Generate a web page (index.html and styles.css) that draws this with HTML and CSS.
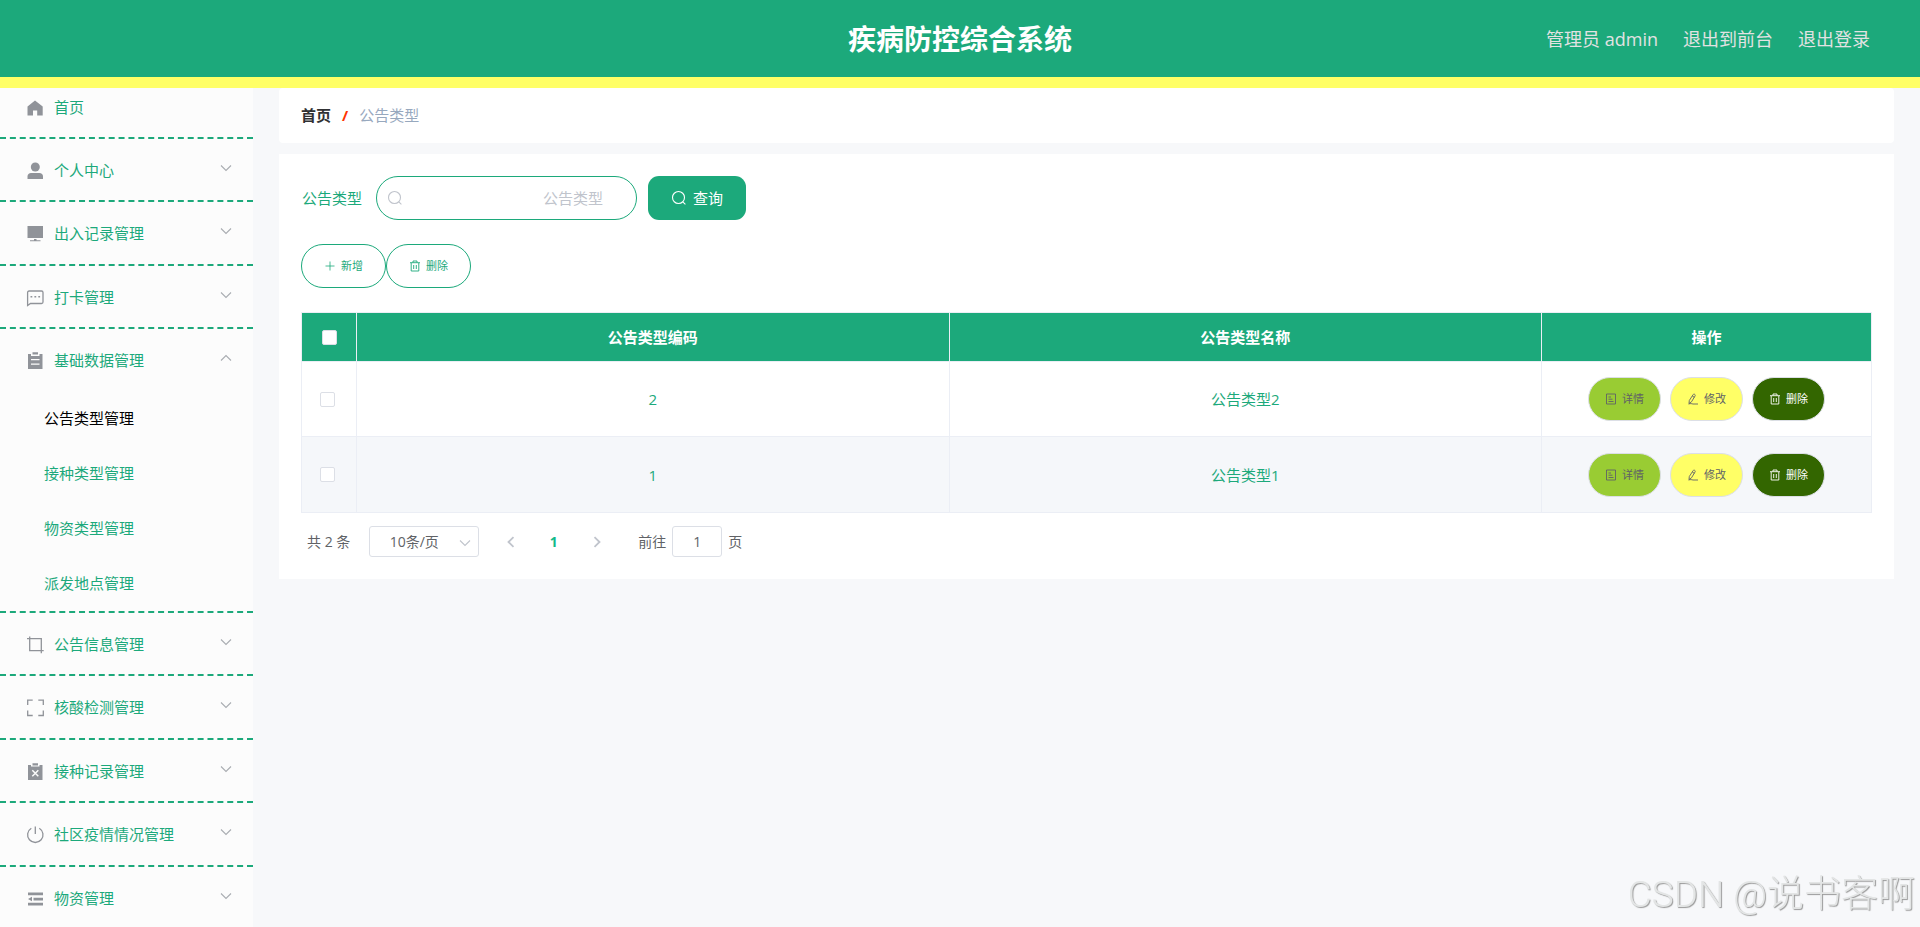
FILE: index.html
```html
<!DOCTYPE html>
<html lang="zh-CN">
<head>
<meta charset="utf-8">
<title>疾病防控综合系统</title>
<link rel="stylesheet" href="styles.css">
</head>
<body>
<svg class="sprite" aria-hidden="true">
  <symbol id="i-down" viewBox="0 0 12 12"><path d="M1 3.5l5 5 5-5" fill="none" stroke="currentColor" stroke-width="1.1"/></symbol>
  <symbol id="i-up" viewBox="0 0 12 12"><path d="M1 8.5l5-5 5 5" fill="none" stroke="currentColor" stroke-width="1.1"/></symbol>
  <symbol id="i-left" viewBox="0 0 12 12"><path d="M8.5 1.2L3.5 6l5 4.8" fill="none" stroke="currentColor" stroke-width="1.8"/></symbol>
  <symbol id="i-right" viewBox="0 0 12 12"><path d="M3.5 1.2l5 4.8-5 4.8" fill="none" stroke="currentColor" stroke-width="1.8"/></symbol>
  <symbol id="i-search" viewBox="0 0 16 16"><g fill="none" stroke="currentColor" stroke-width="1.1"><circle cx="7.5" cy="7.5" r="6"/><path d="M11.8 11.8l2.6 2.6"/></g></symbol>
  <symbol id="i-plus" viewBox="0 0 12 12"><path d="M6 1.500v9M1.500 6h9" fill="none" stroke="currentColor" stroke-width=".8"/></symbol>
  <symbol id="i-trash" viewBox="0 0 12 12"><path d="M1 2.7h10M4 2.5V1h4v1.5M2.2 3v8h7.6V3M4.7 5v4M7.3 5v4" fill="none" stroke="currentColor" stroke-width=".9"/></symbol>
  <symbol id="i-doc" viewBox="0 0 12 12"><path d="M1.5 1h9v10h-9zM3.5 4h2.5M3.5 6.2h4M3.5 8.5h5" fill="none" stroke="currentColor" stroke-width=".9"/></symbol>
  <symbol id="i-edit" viewBox="0 0 12 12"><path d="M6 1.8c.4-.7 1-.8 1.600-.5.7.4.8 1 .5 1.600L4.500 8.800 2 10.500l.3-3zM5.300 3.100l2.100 1.200M1.500 11c2.500-.8 3-.2 4.500 0h5" fill="none" stroke="currentColor" stroke-width=".9"/></symbol>
</svg>

<header class="topbar">
  <h1 class="topbar-title">疾病防控综合系统</h1>
  <nav class="topbar-nav">
    <span>管理员 admin</span>
    <a href="#">退出到前台</a>
    <a href="#">退出登录</a>
  </nav>
</header>

<div class="layout">
  <aside class="sidebar">
    <ul class="menu">
      <li class="menu-item menu-home">
        <a class="menu-title" href="#"><svg class="menu-icon" viewBox="0 0 20 20"><path d="M10 3.500L2.500 9.500V18.500H8v-5h4.200v5h5.500V9.500z"/></svg><span>首页</span></a>
      </li>
      <li class="menu-item">
        <button class="menu-title" type="button"><svg class="menu-icon" viewBox="0 0 20 20"><circle cx="10.300" cy="7" r="4.500"/><path d="M2.500 19v-2.500c0-2 1.500-3.500 3.500-3.500h8.500c2 0 3.500 1.500 3.500 3.500V19z"/></svg><span>个人中心</span><svg class="menu-arrow"><use href="#i-down"/></svg></button>
      </li>
      <li class="menu-item">
        <button class="menu-title" type="button"><svg class="menu-icon" viewBox="0 0 20 20"><path d="M2.500 3H18v12H2.500zM9 16h2.500v1.200h4V18.300H5v-1.100h4z"/></svg><span>出入记录管理</span><svg class="menu-arrow"><use href="#i-down"/></svg></button>
      </li>
      <li class="menu-item">
        <button class="menu-title" type="button"><svg class="menu-icon" viewBox="0 0 20 20"><path class="line" d="M2.600 18.500V5.500q0-1.500 1.500-1.500h12.400q1.500 0 1.500 1.500v9.500q0 1.500-1.500 1.500H5.500z"/><path d="M5.500 9h1.800v1.600H5.500zM9.400 9h1.800v1.600H9.400zM13.300 9h1.800v1.600h-1.800z"/></svg><span>打卡管理</span><svg class="menu-arrow"><use href="#i-down"/></svg></button>
      </li>
      <li class="menu-item">
        <button class="menu-title" type="button" aria-expanded="true"><svg class="menu-icon" viewBox="0 0 20 20"><path fill-rule="evenodd" d="M3 4h3v2h8.500V4h3v15H3zM6 9v1.200h8.500V9zM6 13.500v1.200h8.500v-1.200zM7.500 2.300h5.500V4.500H7.500z"/></svg><span>基础数据管理</span><svg class="menu-arrow"><use href="#i-up"/></svg></button>
        <ul class="submenu">
          <li><a class="is-active" href="#">公告类型管理</a></li>
          <li><a href="#">接种类型管理</a></li>
          <li><a href="#">物资类型管理</a></li>
          <li><a href="#">派发地点管理</a></li>
        </ul>
      </li>
      <li class="menu-item">
        <button class="menu-title" type="button"><svg class="menu-icon" viewBox="0 0 20 20"><path class="line" d="M2 4.700h14.300v14.500M4.700 2.500v14.200h14"/></svg><span>公告信息管理</span><svg class="menu-arrow"><use href="#i-down"/></svg></button>
      </li>
      <li class="menu-item">
        <button class="menu-title" type="button"><svg class="menu-icon" viewBox="0 0 20 20"><path class="line" d="M2.700 8V3.200h5M13.300 3.200h5V8M18.300 13.500v5h-5M7.700 18.500h-5v-5"/></svg><span>核酸检测管理</span><svg class="menu-arrow"><use href="#i-down"/></svg></button>
      </li>
      <li class="menu-item">
        <button class="menu-title" type="button"><svg class="menu-icon" viewBox="0 0 20 20"><path d="M3 4h3v1.500h8.500V4h3v15H3zM7.500 2.300h5.500V4.500H7.500z"/><path class="cut" d="M7.300 9.300l6 6M13.300 9.300l-6 6"/></svg><span>接种记录管理</span><svg class="menu-arrow"><use href="#i-down"/></svg></button>
      </li>
      <li class="menu-item">
        <button class="menu-title" type="button"><svg class="menu-icon" viewBox="0 0 20 20"><path class="line" d="M10.300 2.500V10M6.300 4.200a7.700 7.700 0 1 0 8 0"/></svg><span>社区疫情情况管理</span><svg class="menu-arrow"><use href="#i-down"/></svg></button>
      </li>
      <li class="menu-item">
        <button class="menu-title" type="button"><svg class="menu-icon" viewBox="0 0 20 20"><path d="M3 4.500h15v2.800H3zM8.500 9.700H18v2.800H8.500zM3 14.700h15v2.800H3zM3 11l4-2.300v4.600z"/></svg><span>物资管理</span><svg class="menu-arrow"><use href="#i-down"/></svg></button>
      </li>
    </ul>
  </aside>

  <main class="content">
    <nav class="breadcrumb" aria-label="面包屑">
      <a href="#">首页</a><span class="breadcrumb-sep">/</span><span>公告类型</span>
    </nav>

    <section class="panel">
      <form class="search">
        <label for="type-name">公告类型</label>
        <div class="search-field">
          <svg class="search-icon"><use href="#i-search"/></svg>
          <input id="type-name" type="text" placeholder="公告类型">
        </div>
        <button class="btn-search" type="button"><svg class="search-glyph"><use href="#i-search"/></svg>查询</button>
      </form>

      <div class="toolbar">
        <button class="btn btn-outline" type="button"><svg><use href="#i-plus"/></svg>新增</button>
        <button class="btn btn-outline" type="button"><svg><use href="#i-trash"/></svg>删除</button>
      </div>

      <table class="table">
        <colgroup><col class="col-check"><col><col><col class="col-actions"></colgroup>
        <thead>
          <tr><th><input type="checkbox" aria-label="全选"></th><th>公告类型编码</th><th>公告类型名称</th><th>操作</th></tr>
        </thead>
        <tbody>
          <tr>
            <td class="cell-check"><input type="checkbox" aria-label="选择 2"></td><td>2</td><td>公告类型2</td>
            <td><div class="actions">
              <button class="btn btn-detail" type="button"><svg><use href="#i-doc"/></svg>详情</button>
              <button class="btn btn-edit" type="button"><svg><use href="#i-edit"/></svg>修改</button>
              <button class="btn btn-delete" type="button"><svg><use href="#i-trash"/></svg>删除</button>
            </div></td>
          </tr>
          <tr>
            <td class="cell-check"><input type="checkbox" aria-label="选择 1"></td><td>1</td><td>公告类型1</td>
            <td><div class="actions">
              <button class="btn btn-detail" type="button"><svg><use href="#i-doc"/></svg>详情</button>
              <button class="btn btn-edit" type="button"><svg><use href="#i-edit"/></svg>修改</button>
              <button class="btn btn-delete" type="button"><svg><use href="#i-trash"/></svg>删除</button>
            </div></td>
          </tr>
        </tbody>
      </table>

      <div class="pagination">
        <span>共 2 条</span>
        <div class="page-size">
          <select aria-label="每页条数"><option>10条/页</option></select>
          <svg><use href="#i-down"/></svg>
        </div>
        <div class="pager">
          <button type="button" aria-label="上一页" disabled><svg><use href="#i-left"/></svg></button>
          <button class="is-current" type="button">1</button>
          <button type="button" aria-label="下一页" disabled><svg><use href="#i-right"/></svg></button>
        </div>
        <div class="jump">
          <label for="page-no">前往</label><input id="page-no" type="text" value="1"><span>页</span>
        </div>
      </div>
    </section>
  </main>
</div>
<div class="watermark">CSDN @说书客啊</div>
</body>
</html>
```
FILE: styles.css
```css
:root {
  --green: #1ca97b;
  --yellow: #ffff66;
  --line: #ebeef5;
  --muted: #c0c4cc;
}

* {
  box-sizing: border-box;
}

body {
  display: flex;
  flex-direction: column;
  height: 100vh;
  margin: 0;
  overflow: hidden;
  background: #f7f8fa;
  color: var(--green);
  font: 15px/20px "Open Sans", "Noto Sans CJK SC", sans-serif;
}

a {
  color: inherit;
  text-decoration: none;
}

ul {
  margin: 0;
  padding: 0;
  list-style: none;
}

button,
input,
select {
  margin: 0;
  font: inherit;
  color: inherit;
}

button {
  cursor: pointer;
}

.sprite {
  display: none;
}

/* Header */
.topbar {
  display: grid;
  grid-template-columns: 1fr auto 1fr;
  flex: none;
  align-items: center;
  height: 88px;
  padding: 0 50px;
  border-bottom: 11px solid var(--yellow);
  background: var(--green);
}

.topbar-title {
  grid-column: 2;
  margin: 0;
  color: #fff;
  font-size: 28px;
  line-height: 40px;
}

.topbar-nav {
  display: flex;
  justify-content: flex-end;
  gap: 25px;
  color: #e2e2e2;
  font-size: 18px;
  line-height: 24px;
}

/* Sidebar */
.layout {
  display: flex;
  flex: 1;
  min-height: 0;
}

.sidebar {
  flex: none;
  width: 253px;
  overflow: hidden;
  background: #fcfcfc;
}

.menu-item {
  border-bottom: 2px dashed var(--green);
}

.menu-title {
  display: flex;
  align-items: center;
  gap: 9px;
  width: 100%;
  height: 61px;
  padding: 0 21px 0 25px;
  border: 0;
  background: none;
  text-align: left;
}

.menu-item:nth-child(odd) .menu-title {
  height: 62px;
}

.menu-item.menu-home .menu-title {
  height: 49px;
  padding-bottom: 12px;
}

.menu-icon {
  width: 20px;
  height: 20px;
  fill: #909399;
}

.menu-icon .line {
  fill: none;
  stroke: #909399;
  stroke-width: 1.300;
}

.menu-icon .cut {
  fill: none;
  stroke: #fcfcfc;
  stroke-width: 1.500;
}

.menu-arrow {
  width: 12px;
  height: 12px;
  margin: 0 0 4px auto;
  color: #a9acb1;
}

.submenu a {
  display: block;
  padding-left: 44px;
  line-height: 55px;
}

.submenu .is-active {
  color: #000;
}

/* Content */
.content {
  flex: 1;
  min-width: 0;
  padding: 0 26px;
}

.breadcrumb {
  display: flex;
  align-items: center;
  gap: 11px;
  height: 55px;
  margin-bottom: 11px;
  padding: 0 22px 2px;
  border-radius: 4px;
  background: #fff;
  color: #97a8be;
}

.breadcrumb a {
  color: #303133;
  font-weight: 700;
}

.breadcrumb-sep {
  color: #ff3300;
  font-weight: 700;
}

.panel {
  padding: 22px;
  background: #fff;
}

.search {
  display: flex;
  align-items: center;
  gap: 11px;
  margin-bottom: 24px;
}

.search label {
  padding-left: 1px;
}

.search-field {
  position: relative;
  width: 261px;
  margin-left: 3px;
}

.search-field input {
  display: block;
  width: 100%;
  height: 44px;
  padding: 0 33px;
  border: 1px solid var(--green);
  border-radius: 22px;
  background: #fff;
  text-align: right;
  outline: 0;
}

.search-field input::placeholder {
  color: var(--muted);
  opacity: 1;
}

.search-icon {
  position: absolute;
  top: 14px;
  left: 11px;
  width: 16px;
  height: 16px;
  color: var(--muted);
}

.btn-search {
  display: flex;
  align-items: center;
  justify-content: center;
  gap: 6px;
  width: 98px;
  height: 44px;
  border: 0;
  border-radius: 11px;
  background: var(--green);
  color: #fff;
}

.search-glyph {
  width: 16px;
  height: 16px;
}

.toolbar {
  display: flex;
  margin-bottom: 24px;
}

.btn {
  display: flex;
  align-items: center;
  justify-content: center;
  gap: 5px;
  width: 73px;
  height: 44px;
  padding: 0;
  border: 1px solid #dcdfe6;
  border-radius: 22px;
  font-size: 11px;
}

.btn svg {
  width: 12px;
  height: 12px;
}

.btn-outline {
  width: 85px;
  border-color: var(--green);
  background: #fff;
}

.btn-detail {
  background: #99cc33;
  color: #606266;
}

.btn-edit {
  background: var(--yellow);
  color: #606266;
}

.btn-delete {
  background: #336600;
  color: #fff;
}

/* Table */
.table {
  width: 100%;
  border: 1px solid var(--line);
  border-width: 1px 0 0 1px;
  border-spacing: 0;
  table-layout: fixed;
  text-align: center;
}

.col-check {
  width: 55px;
}

.col-actions {
  width: 330px;
}

.table th,
.table td {
  padding: 0;
  border: 1px solid var(--line);
  border-width: 0 1px 1px 0;
}

.table th {
  height: 49px;
  background: var(--green);
  color: #fff;
}

.table td {
  height: 75px;
}

.table tbody tr:nth-child(even) {
  background: #f5f7fa;
}

.table tbody tr:nth-child(even) td {
  height: 76px;
}

.table .cell-check {
  padding-right: 4px;
}

.table input {
  display: block;
  width: 15px;
  height: 15px;
  margin: 0 auto;
  border: 1px solid #dcdfe6;
  border-radius: 2px;
  background: #fff;
  appearance: none;
}

.actions {
  display: flex;
  justify-content: center;
  gap: 9px;
}

/* Pagination */
.pagination {
  display: flex;
  align-items: center;
  margin-top: 13px;
  padding-left: 6px;
  color: #606266;
  font-size: 14px;
}

.page-size {
  position: relative;
  width: 110px;
  margin-left: 19px;
}

.page-size select {
  display: block;
  width: 100%;
  height: 31px;
  padding: 0 20px 0 0;
  border: 1px solid #dcdfe6;
  border-radius: 3px;
  background: #fff;
  text-align: center;
  text-align-last: center;
  appearance: none;
}

.page-size svg {
  position: absolute;
  top: 11px;
  right: 8px;
  width: 12px;
  height: 12px;
  color: var(--muted);
  pointer-events: none;
}

.pager {
  display: flex;
  margin: 0 20px 0 10px;
}

.pager button {
  display: flex;
  align-items: center;
  justify-content: center;
  width: 43px;
  height: 31px;
  padding: 0;
  border: 0;
  background: none;
  color: var(--muted);
}

.pager svg {
  width: 12px;
  height: 12px;
}

.pager .is-current {
  color: #13b98a;
  font-weight: 700;
}

.jump {
  display: flex;
  align-items: center;
  gap: 6px;
}

.jump input {
  width: 50px;
  height: 31px;
  padding: 0;
  border: 1px solid #dcdfe6;
  border-radius: 3px;
  text-align: center;
}

.watermark {
  position: fixed;
  right: 5px;
  bottom: 8px;
  color: #e3e5e5;
  font: 300 37px/48px Roboto, "Noto Sans CJK SC", sans-serif;
  text-shadow: 1px 1px 1px #999;
  pointer-events: none;
}
```
